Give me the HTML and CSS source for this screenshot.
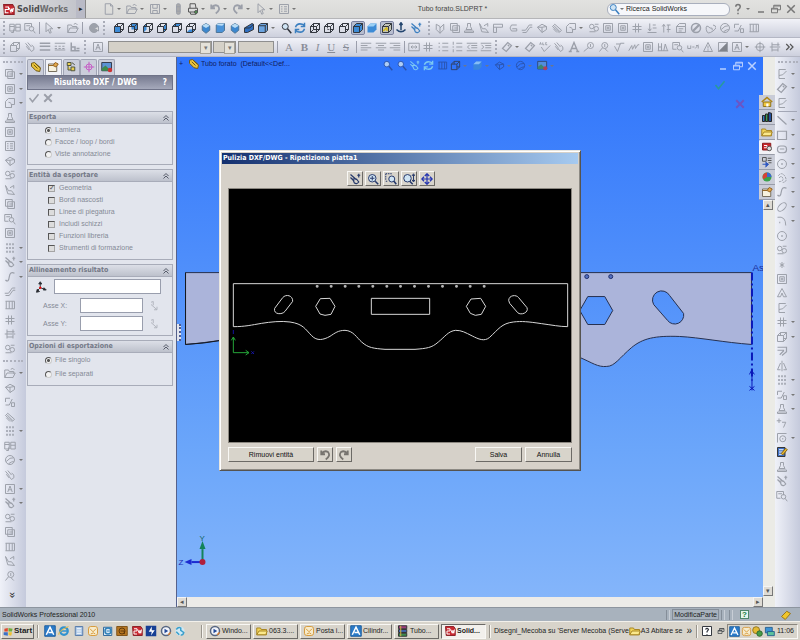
FILE: index.html
```html
<!DOCTYPE html>
<html lang="it">
<head>
    <meta charset="UTF-8">
    <title>SolidWorks - Tubo forato.SLDPRT</title>
    <link rel="stylesheet" href="styles.css">
</head>
<body>
    <header class="titlebar">
        <div class="brand"><span data-icon="sw"></span><b>Solid</b>Works</div>
        <button class="brand-arrow" aria-label="Menu">▸</button>
        <div class="icons file-tools" data-icons="page* open* save* lamp print:dark* undo* redo* cursor* list*"></div>
        <h1>Tubo forato.SLDPRT *</h1>
        <label class="search"><span data-icon="lens:blue"></span><span class="caret"></span>
            <input type="text" value="Ricerca SolidWorks" aria-label="Ricerca"></label>
        <div class="icons window-tools" data-icons="help* minimize restore close"></div>
    </header>

    <div class="toolbar">
        <i class="grip"></i>
        <div class="icons g-two" data-icons="frame search2"></div>
        <i class="sep"></i>
        <div class="icons g-select" data-icons="cursor* open"></div>
        <i class="sep"></i>
        <div class="icons g-one" data-icons="ball"></div>
        <i class="grip"></i>
        <div class="icons g-views" data-icons="front:ink back:ink left:ink right:ink top:ink bottom:ink iso:ink dim:ink iso:ink normal:ink view:ink* lens:ink rotate:blue wire:ink hidden:ink cube:ink shaded:ink! solid:blue section:ink! axis:blue spray:blue"></div>
        <i class="grip"></i>
        <div class="icons g-features" data-icons="blade stack stamp fold flange hem jog vent lofted corner* gear frame2 frame2 grid2 down up cards nosign ripple ball2 angle bars"></div>
    </div>

    <div class="toolbar">
        <i class="grip"></i>
        <div class="icons g-format" data-icons="cube brush lines hatch layer"></div>
        <i class="grip"></i>
        <div class="icons g-one" data-icons="style"></div>
        <span class="combo font-name"><select aria-label="Carattere"><option></option></select></span>
        <span class="combo font-size"><select aria-label="Dimensione"><option></option></select></span>
        <input class="height" type="text" aria-label="Altezza">
        <i class="sep"></i>
        <div class="letters">
            <button>A</button><button><b>B</b></button><button><i>I</i></button><button><u>U</u></button><button><s>S</s></button>
        </div>
        <i class="sep"></i>
        <div class="icons g-three" data-icons="alignl alignc alignr"></div>
        <i class="sep"></i>
        <div class="icons g-lists" data-icons="width grid2 bullets numbers outdent indent"></div>
        <i class="grip"></i>
        <div class="icons g-notes" data-icons="tag* tag spell brush textA balloon balloon2 rough weld frame2 dimA search2 bracket warn checker style* target cut more:dark"></div>
    </div>

    <main>
        <nav class="sidebar">
            <i class="grip"></i>
            <div class="icons s-first" data-icons="stack* frame2* corner* stamp frame2 list vent gear fold stack search2 frame2 grid* spray* spline* jog bars grid2 cut gear"></div>
            <i class="grip"></i>
            <div class="icons s-second" data-icons="open* vent angle lofted grid* frame ball2* brush style* spray* gear stack bars fold balloon2"></div>
            <button class="expand">»</button>
        </nav>

        <section class="manager">
            <div class="tabs icons" data-icons="part page2! config cross render"></div>
            <h2>Risultato DXF / DWG <span>?</span></h2>
            <div class="confirm icons" data-icons="check x"></div>

            <fieldset>
                <legend>Esporta <span data-icon="fold2"></span></legend>
                <label><input type="radio" name="source" checked>Lamiera</label>
                <label><input type="radio" name="source">Facce / loop / bordi</label>
                <label><input type="radio" name="source">Viste annotazione</label>
            </fieldset>
            <fieldset class="checks">
                <legend>Entità da esportare <span data-icon="fold2"></span></legend>
                <label><input type="checkbox" checked>Geometria</label>
                <label><input type="checkbox">Bordi nascosti</label>
                <label><input type="checkbox">Linee di piegatura</label>
                <label><input type="checkbox">Includi schizzi</label>
                <label><input type="checkbox">Funzioni libreria</label>
                <label><input type="checkbox">Strumenti di formazione</label>
            </fieldset>
            <fieldset class="align">
                <legend>Allineamento risultato <span data-icon="fold2"></span></legend>
                <div class="origin"><span data-icon="triad:ink"></span><input type="text" aria-label="Origine"></div>
                <div class="axis"><label for="axisX">Asse X:</label><input type="text" id="axisX"><span data-icon="flip"></span></div>
                <div class="axis"><label for="axisY">Asse Y:</label><input type="text" id="axisY"><span data-icon="flip"></span></div>
            </fieldset>
            <fieldset class="options">
                <legend>Opzioni di esportazione <span data-icon="fold2"></span></legend>
                <label><input type="radio" name="files" checked>File singolo</label>
                <label><input type="radio" name="files">File separati</label>
            </fieldset>
        </section>

        <section class="view">
            <div class="scene">
                <svg class="model" viewBox="177 56 586 541">
                    <path class="face" fill-rule="evenodd" d="M185 272H752V344C725 342 700 337 680 336C655 335 643 338 632 347C620 357 615 366 607 366C598 367 592 362 580 357C560 349 550 357 535 370C515 388 420 388 400 370C385 357 375 349 355 357C342 362 337 367 328 366C318 365 315 357 303 347C292 338 280 335 255 336C235 337 210 342 185 344ZM580 310L588 296H605L613 310L605 324H588ZM654 304A9 9 0 0 1 670 295L684 313A9 9 0 0 1 668 320Z"/>
                    <path class="edge" d="M185 272V344M185 344Q204 343 220 340"/>
                    <circle class="hole" cx="587" cy="276" r="2"/>
                    <circle class="hole" cx="611" cy="276" r="2"/>
                    <path class="axis-line" d="M752.500 272V380"/>
                    <path class="axis-end" d="M752.500 372V390M750 374l2-4 3 4M750 386l5 4M755 386l-5 4"/>
                    <text class="axis-name" x="753" y="270">As</text>
                    <path d="M202 561V549" stroke="#14835a" stroke-width="2"/>
                    <path d="M202 541l3 8h-6z" fill="#14835a"/>
                    <path d="M202 562H191" stroke="#1c2bd0" stroke-width="2"/>
                    <path d="M184 562l7-3v6z" fill="#1c2bd0"/>
                    <circle cx="202" cy="562" r="3" fill="#b01f3c"/>
                    <text class="triad-y" x="199" y="541">Y</text>
                    <text class="triad-z" x="178" y="565">Z</text>
                </svg>
                <div class="tree"><span class="plus">+</span><span data-icon="part"></span>Tubo forato&nbsp; (Default&lt;&lt;Def...</div>
                <div class="icons headsup" data-icons="lens lens spray:cyan rotate:cyan bars cube:ink* solid* vent* ball2* render*"></div>
                <div class="icons doc-window" data-icons="minimize restore close"></div>
                <div class="icons corner-ok" data-icons="check"></div>
                <div class="icons corner-no" data-icons="x"></div>
                <i class="splitter"></i>
            </div>
            <div class="hscroll"><button>◂</button><button>▸</button></div>
        </section>

        <aside class="vscroll">
            <div class="icons task-tabs" data-icons="home library folder resource! palette sphere page2"></div>
            <button class="up">▴</button>
            <button class="down">▾</button>
        </aside>

        <nav class="sidebar sketch">
            <i class="grip"></i>
            <div class="icons k-first" data-icons="sketch* tag* sketch"></div>
            <i class="line"></i>
            <div class="icons k-second" data-icons="slash* rect* slot* circle* spiral* spline* ellipse* arc* circle gear star frame2 textA2 sketch grid2* cube* offset mirror grid* angle* stamp* plus2 target2* color stamp spray search2"></div>
        </nav>
    </main>

    <footer class="status">
        <span>SolidWorks Professional 2010</span>
        <i></i><b>ModificaParte</b><i></i><i></i>
        <em>?</em>
        <span class="tag-icon" data-icon="goldtag"></span>
    </footer>

    <footer class="taskbar">
        <button class="start"><span data-icon="windows"></span>Start</button>
        <i class="div"></i>
        <div class="icons quick" data-icons="appA ie note mail outlook fox sw bird player globe"></div>
        <i class="div"></i>
        <div class="tasks">
            <button><span data-icon="player"></span>Windo...</button>
            <button><span data-icon="folder"></span>063.3....</button>
            <button><span data-icon="mail"></span>Posta i...</button>
            <button><span data-icon="appA"></span>Cilindr...</button>
            <button><span data-icon="rar"></span>Tubo...</button>
            <button class="current"><span data-icon="sw"></span>Solid...</button>
        </div>
        <i class="div"></i>
        <span class="links">Disegni_Mecoba su 'Server Mecoba (Serve</span>
        <span data-icon="folder"></span>
        <span class="links folder-link">A3 Abitare se</span>
        <span class="chevron">»</span>
        <i class="div"></i>
        <div class="icons lang" data-icons="helpbox:ink restore:ink"></div>
        <div class="tray"><div class="icons" data-icons="appA mail shield screen"></div><time>11:06</time></div>
    </footer>

    <section class="dialog" role="dialog" aria-labelledby="dialogTitle">
        <h3 id="dialogTitle">Pulizia DXF/DWG - Ripetizione piatta1</h3>
        <div class="icons dialog-tools" data-icons="spray:navy lensplus:navy lensbox:navy lensarrow:navy move:navy"></div>
        <svg class="preview" viewBox="42 -213 1026 759">
            <path d="M55 200V71H1058V200C1035 200 1010 195 980 191C940 185 920 183 895 186C860 190 850 208 824 232C808 246 790 237 772 228C750 217 740 211 722 211C700 213 690 230 670 246C650 264 635 265 600 268H510C475 265 460 264 440 246C425 233 415 212 390 211C370 211 360 219 345 229C325 240 306 244 290 227C270 207 265 192 225 186C200 182 165 186 140 190C110 195 90 200 55 200Z"/>
            <path d="M469 115H644V163H469ZM302 139L316 116L345 115L360 139L348 163L330 166L315 162ZM754 139L768 117L797 115L812 139L799 163L781 166L766 160Z"/>
            <path d="M179 145L203 113C213 101 234 106 233 124L210 154C202 165 174 164 179 145ZM881 121C882 105 904 103 911 113L936 143C942 158 918 167 908 158L884 130Z"/>
            <path class="dots" d="M306 79h1M348 79h1M390 79h1M431 79h1M473 79h1M515 79h1M556 79h1M598 79h1M640 79h1M682 79h1M724 79h1M765 79h1M807 79h1"/>
            <path class="green" d="M55 278V232M49 241L55 231L61 241M55 278H102M92 271L102 278L92 285"/>
            <path class="blue" d="M109 274l8 8M117 274l-8 8M55 210v12"/>
        </svg>
        <div class="dialog-actions">
            <button class="remove">Rimuovi entità</button>
            <button class="square" aria-label="Annulla azione"><span data-icon="undo"></span></button>
            <button class="square" aria-label="Ripeti"><span data-icon="redo"></span></button>
            <span class="space"></span>
            <button>Salva</button>
            <button>Annulla</button>
        </div>
    </section>

    <script src="icons.js"></script>
</body>
</html>
```
FILE: styles.css
```css
* {
    box-sizing: border-box;
}

body {
    margin: 0;
    height: 100vh;
    display: flex;
    flex-direction: column;
    overflow: hidden;
    background: #e2e5ed;
    color: #222;
    font-family: "Liberation Sans", Arial, sans-serif;
    font-size: 7px;
    line-height: 12px;
}

h1, h2, h3, fieldset, legend {
    margin: 0;
    padding: 0;
    font-size: inherit;
}

button, input, select {
    margin: 0;
    padding: 0;
    border: 0;
    background: none;
    color: inherit;
    font: inherit;
}

[data-icon], .icons, .icons button, .letters {
    display: flex;
    align-items: center;
}

svg {
    display: block;
}

.icon {
    width: 12px;
    height: 12px;
    fill: none;
    stroke: currentColor;
    stroke-width: 1.3;
    flex: none;
}

.icons {
    justify-content: space-between;
    color: #9b9fa9;
}

.icons button {
    position: relative;
    flex: none;
}

.icons .drop {
    padding-right: 8px;
}

.icons .drop::after, .caret {
    content: "";
    border: 2px solid transparent;
    border-top-color: #777;
    border-bottom: 0;
}

.icons .drop::after {
    position: absolute;
    right: 2px;
    top: 5px;
}

.icons .ink, .ink { color: #30343c; }
.icons .dark { color: #555; }
.icons .blue, .blue { color: #3b7fc0; }
.icons .navy { color: #25386a; }
.icons .cyan { color: #8edcf0; }

/* title bar */
.titlebar {
    flex: none;
    height: 19px;
    display: flex;
    align-items: center;
    background: linear-gradient(#e2e2e0, #d9d9d7);
    border-bottom: 1px solid #b5b5b8;
}

.brand {
    width: 76px;
    height: 18px;
    display: flex;
    align-items: center;
    padding-left: 2px;
    background: linear-gradient(90deg, #e0e0e0, #c4c5cc);
    color: #6e6e70;
    font: bold 9px/12px "DejaVu Sans Condensed", sans-serif;
}

.brand .icon {
    width: 13px;
    height: 13px;
    margin-right: 2px;
}

.brand b {
    color: #4c4c4e;
}

.brand-arrow {
    width: 10px;
    height: 18px;
    background: #b9bac6;
    border-right: 1px solid #888;
}

.file-tools {
    width: 195px;
    margin-left: 17px;
}

.titlebar h1 {
    flex: 1;
    text-align: center;
    font-weight: normal;
    color: #444;
}

.search {
    width: 123px;
    height: 13px;
    display: flex;
    align-items: center;
    background: #f6f7fa;
    border: 1px solid #a9afbd;
    border-radius: 6px;
}

.search .caret {
    margin: 0 2px 0 0;
}

.search input {
    min-width: 0;
    flex: 1;
}

.window-tools {
    width: 65px;
    margin: 0 3px 0 2px;
    color: #777;
}

/* toolbars */
.toolbar {
    flex: none;
    height: 19px;
    display: flex;
    align-items: center;
    background: linear-gradient(#f1f2f8, #cdd0dd);
    border-bottom: 1px solid #b4b7c4;
}

.grip {
    flex: none;
    width: 2px;
    height: 14px;
    margin: 0 4px 0 3px;
    border-left: 2px dotted #a9acb8;
}

.sep {
    flex: none;
    width: 1px;
    height: 12px;
    margin: 0 3px;
    background: #9b9eab;
}

.g-two { width: 27px; }
.g-select { width: 36px; }
.g-one { width: 14px; }
.g-three { width: 41px; }
.g-lists { width: 84px; }
.g-format { width: 72px; }

.g-one {
    padding-left: 2px;
}

.g-views {
    width: 316px;
    padding: 0 3px 0 4px;
}

.g-features {
    flex: 1;
    margin-right: 40px;
}

.g-notes {
    flex: 1;
    margin-right: 4px;
}

.icons .active {
    background: #b7bdcf;
    outline: 1px solid #7b82a0;
    border-radius: 1px;
}

.combo {
    position: relative;
    height: 12px;
    margin-left: 1px;
    background: #d5d1c8;
    border: 1px solid #8f8f8f;
}

.combo select {
    width: 100%;
    height: 10px;
    display: block;
    appearance: none;
}

.combo::after {
    content: "▾";
    position: absolute;
    right: 0;
    top: 0;
    width: 9px;
    height: 10px;
    line-height: 9px;
    text-align: center;
    color: #777;
    background: #e4e1d9;
    border: 1px solid #a5a29a;
}

.font-name {
    width: 104px;
    margin-left: 4px;
}

.font-size { width: 23px; }

.height {
    width: 36px;
    height: 12px;
    margin-left: 2px;
    background: #d5d1c8;
    border: 1px solid #8f8f8f;
}

.letters {
    width: 72px;
    justify-content: space-around;
    color: #898d98;
    font-family: "Liberation Serif", serif;
    font-size: 11px;
}

/* work area */
main {
    flex: 1;
    min-height: 0;
    display: flex;
}

.sidebar {
    flex: none;
    width: 26px;
    display: flex;
    flex-direction: column;
    background: linear-gradient(90deg, #eff1f8, #c5cadc);
}

.sidebar .grip {
    width: 20px;
    height: 2px;
    margin: 4px 3px;
    border-left: 0;
    border-top: 2px dotted #aeb1bd;
}

.sidebar .icons {
    flex-direction: column;
    align-items: flex-start;
    justify-content: space-around;
    padding-left: 4px;
}

.sidebar .icons .drop {
    padding-right: 9px;
}

.s-first { flex: 20; }
.s-second { flex: 15; }

.sidebar .expand {
    height: 24px;
    padding-left: 0;
    font-size: 11px;
    transform: rotate(90deg);
}

.sketch {
    width: 25px;
}

.sketch .k-first {
    height: 43px;
    padding-left: 1px;
}

.sketch .k-second {
    height: 390px;
    padding-left: 1px;
}

.line {
    height: 1px;
    margin: 1px 3px;
    background: #a3a7b6;
}

.manager {
    flex: none;
    width: 151px;
    padding: 1px 3px 0 1px;
    background: #e2e5ed;
    border-right: 1px solid #56628c;
}

.tabs {
    width: 88px;
    height: 17px;
}

.tabs button {
    width: 17px;
    height: 16px;
    justify-content: center;
    background: #cbcedb;
    border: 1px solid #a0a4b4;
    border-bottom: 0;
    border-radius: 2px 2px 0 0;
}

.tabs .active {
    background: #f1f2f7;
    outline: 0;
}

.manager h2 {
    height: 15px;
    padding: 0 5px 0 26px;
    display: flex;
    justify-content: space-between;
    background: linear-gradient(#777b90, #a5a9bb);
    border: 1px solid #6f7388;
    color: #fff;
    font: bold 8px/13px "DejaVu Sans Condensed", sans-serif;
}

.confirm {
    width: 28px;
    height: 16px;
    margin-bottom: 5px;
    justify-content: space-around;
}

fieldset {
    min-width: 0;
    margin-bottom: 4px;
    padding-bottom: 4px;
    border: 1px solid #a8acb9;
    color: #858a96;
}

legend {
    float: left;
    width: 100%;
    height: 12px;
    padding: 0 1px;
    display: flex;
    justify-content: space-between;
    background: linear-gradient(#dcdfe7, #bdc1cc);
    border-bottom: 1px solid #a8acb9;
    color: #747987;
    font: bold 7px/11px "DejaVu Sans Condensed", sans-serif;
}

legend .icon {
    width: 10px;
    height: 10px;
}

fieldset > label, .origin {
    clear: both;
    display: flex;
    align-items: center;
    height: 12px;
    padding-left: 17px;
}

fieldset input[type="radio"], fieldset input[type="checkbox"] {
    appearance: none;
    width: 7px;
    height: 7px;
    margin-right: 3px;
    border: 1px solid #a5a5a5;
    border-top-color: #555;
    border-left-color: #555;
    background: #dcdcdc;
}

fieldset input[type="radio"] {
    border-radius: 50%;
    border-right-color: #ccc;
    border-bottom-color: #ccc;
    background: #f2f2f2;
}

fieldset input[type="radio"]:checked {
    background: radial-gradient(#555 1px, #f2f2f2 2px);
}

.checks > label {
    padding-left: 20px;
}

.checks input[type="checkbox"] {
    margin-right: 4px;
}

.checks input[type="checkbox"]:checked::after {
    content: "✓";
    display: block;
    color: #555;
    font: bold 7px/5px "DejaVu Sans", sans-serif;
}

.checks {
    padding-bottom: 5px;
}

.align {
    padding-bottom: 3px;
}

.origin {
    height: 19px;
    padding-left: 7px;
}

.align input {
    height: 15px;
    background: #fff;
    border: 1px solid #999ead;
}

.origin input {
    width: 107px;
    margin-left: 7px;
}

.axis {
    display: flex;
    align-items: center;
    height: 17px;
    padding-left: 15px;
    margin-top: 1px;
}

.axis label {
    width: 37px;
}

.axis input {
    width: 63px;
    margin-right: 5px;
}

.options > label {
    height: 14px;
}

/* graphics area */
.view {
    flex: 1;
    min-width: 0;
    display: flex;
    flex-direction: column;
}

.scene {
    position: relative;
    flex: 1;
    min-height: 0;
    background: linear-gradient(#2f74fc, #6ba6fa 73%, #84b5fa);
}

.model {
    position: absolute;
    width: 100%;
    height: 100%;
}

.face {
    fill: #abb4da;
    stroke: #26304f;
}

.edge {
    fill: none;
    stroke: #15181f;
}

.hole {
    fill: #5570c0;
    stroke: #20306c;
}

.axis-line, .axis-end {
    fill: none;
    stroke: #0a18b8;
}

.axis-line {
    stroke-width: 2;
    stroke-dasharray: 8 3 2 3;
}

.axis-name {
    fill: #1b2f9c;
    font-size: 10px;
}

.triad-y { fill: #15655e; font-size: 8px; }
.triad-z { fill: #1c2bb0; font-size: 8px; }

.tree {
    position: absolute;
    left: 2px;
    top: 1px;
    display: flex;
    align-items: center;
    color: #101c5c;
}

.tree .plus {
    width: 9px;
}

.tree [data-icon] {
    margin-right: 1px;
}

.headsup {
    position: absolute;
    left: 205px;
    top: 3px;
    width: 174px;
    color: #294a98;
    opacity: 0.8;
}

.headsup .icon {
    width: 11px;
    height: 11px;
}

.doc-window {
    position: absolute;
    right: 5px;
    top: 3px;
    width: 41px;
    color: #b9d0ff;
}

.corner-ok {
    position: absolute;
    right: 37px;
    top: 22px;
    color: #289a9c;
}

.corner-no {
    position: absolute;
    right: 17px;
    top: 41px;
    color: #6b55c4;
}

.splitter {
    position: absolute;
    left: 0;
    top: 267px;
    width: 4px;
    height: 17px;
    background: #e2e5ed;
    border-right: 2px dotted #4c5c94;
}

.hscroll {
    flex: none;
    height: 10px;
    display: flex;
    justify-content: space-between;
    background: #ecebe8;
}

.hscroll button, .vscroll > button {
    width: 10px;
    height: 10px;
    line-height: 8px;
    background: #dedbd4;
    border: 1px solid;
    border-color: #f4f4f4 #777 #777 #f4f4f4;
    color: #555;
}

.vscroll {
    flex: none;
    width: 12px;
    padding: 38px 1px 11px 0;
    display: flex;
    flex-direction: column;
    background: #ebebe6;
}

.task-tabs {
    position: relative;
    flex-direction: column;
    width: 17px;
    margin-left: -5px;
}

.task-tabs button {
    width: 16px;
    height: 15px;
    justify-content: center;
    background: #c9ccd7;
    border-bottom: 1px solid #989ca9;
}

.task-tabs .active {
    background: #f2f2f6;
    outline: 0;
}

.vscroll .down {
    margin-top: auto;
}

/* bottom bars */
.status {
    flex: none;
    height: 14px;
    display: flex;
    align-items: center;
    padding: 0 8px 0 2px;
    background: #a8b2bd;
    border-top: 1px solid #8d959f;
}

.status span:first-child {
    flex: 1;
}

.status i {
    width: 4px;
    height: 10px;
    margin: 0 2px;
    border-left: 1px solid #858e99;
    border-right: 1px solid #c8ced6;
}

.status b {
    padding: 0 1px;
    border: 1px solid #858e99;
    line-height: 9px;
    font-weight: normal;
}

.status em {
    width: 9px;
    height: 9px;
    margin: 0 31px 0 5px;
    background: #e5f5ec;
    border: 1px solid #50876b;
    color: #137b3a;
    font: bold 8px/8px "Liberation Sans", sans-serif;
    text-align: center;
}

.taskbar {
    flex: none;
    height: 19px;
    display: flex;
    align-items: center;
    padding: 0 2px 0 1px;
    background: #d8d4cb;
    border-top: 1px solid #f2f0eb;
}

.start, .tasks button, .dialog button {
    display: flex;
    align-items: center;
    justify-content: center;
    background: #d8d4cb;
    border: 1px solid;
    border-color: #f8f7f4 #6c6a66 #6c6a66 #f8f7f4;
}

.start {
    width: 33px;
    height: 15px;
    font-size: 8px;
    font-weight: bold;
}

.start .icon {
    width: 11px;
    height: 11px;
}

.div {
    flex: none;
    width: 2px;
    height: 13px;
    margin: 0 3px;
    border-left: 1px solid #99958d;
    border-right: 1px solid #f7f5f0;
}

.quick {
    width: 142px;
    margin: 0 12px 0 2px;
}

.tasks {
    display: flex;
    gap: 2px;
}

.tasks button {
    width: 45px;
    height: 15px;
    justify-content: flex-start;
    padding-left: 2px;
    gap: 1px;
}

.tasks .current {
    background: #f2f0ec;
    border-color: #6c6a66 #f8f7f4 #f8f7f4 #6c6a66;
    font-weight: bold;
}

.links {
    white-space: nowrap;
}

.folder-link {
    flex: 1;
}

.chevron {
    margin: 0 1px;
    font-size: 10px;
}

.lang {
    width: 24px;
}

.lang button:last-child .icon {
    width: 8px;
    height: 8px;
}

.tray {
    width: 71px;
    height: 15px;
    margin-left: 2px;
    padding: 0 3px 0 1px;
    display: flex;
    align-items: center;
    justify-content: space-between;
    border: 1px solid;
    border-color: #8a867e #f8f7f4 #f8f7f4 #8a867e;
}

.tray .icons {
    width: 46px;
}

.tray .icon {
    width: 11px;
    height: 11px;
}

/* dialog */
.dialog {
    position: absolute;
    left: calc(50% - 181px);
    top: 150px;
    width: 362px;
    padding: 2px;
    background: #d6d1c9;
    border: 1px solid;
    border-color: #e8e6e0 #55534f #55534f #e8e6e0;
    box-shadow: inset 1px 1px #fff, inset -1px -1px #8d8a84;
}

.dialog h3 {
    height: 11px;
    padding-left: 1px;
    background: linear-gradient(90deg, #14306f, #a6caf0);
    color: #fff;
    font: bold 7px/11px "DejaVu Sans Condensed", sans-serif;
}

.dialog-tools {
    width: 88px;
    margin: 7px auto 2px 125px;
}

.dialog-tools button, .dialog .square {
    width: 16px;
    height: 15px;
    justify-content: center;
}

.preview {
    display: block;
    width: 344px;
    margin: 0 auto;
    background: #000;
    border: 1px solid #8b8780;
    fill: none;
    stroke: #d6d6d6;
    stroke-width: 3;
}

.preview .dots {
    stroke-width: 8;
    stroke: #b5b5b5;
    stroke-linecap: round;
}

.preview .green { stroke: #25a539; }
.preview .blue { stroke: #1414a0; }

.dialog-actions {
    display: flex;
    gap: 3px;
    padding: 4px 6px 6px;
    color: #111;
}

.dialog-actions button {
    width: 47px;
    height: 15px;
}

.dialog-actions .remove {
    width: 86px;
}

.dialog-actions .square {
    color: #77746f;
}

.dialog-actions .square .icon {
    stroke-width: 2;
}

.dialog-actions .space {
    flex: 1;
}
```
FILE: icons.js
```js
// icon shapes on a 16x16 grid
const box = '<path d="M2 6h8v8H2zM6 2h8v8h-4M6 2v4M2 6l4-4M10 6l4-4M10 14l4-4"/>';
const face = d => `<path d="${d}" fill="#3d8bd6" stroke="none"/>` + box;

const shapes = {
    page: '<path d="M3 1h7l3 3v11H3zM10 1v3h3"/>',
    open: '<path d="M1 14V4h5l1 2h6v3M1 14l3-6h11l-3 6zM9 3q3-3 5 1"/>',
    save: '<path d="M2 2h12v12H2zM5 2v5h6V2M5 14v-4h6v4"/>',
    lamp: '<rect x="6" y="1" width="5" height="14" rx="2" fill="#aaa"/><path d="M6 5h5M6 11h5"/>',
    print: '<path d="M4 7V1h7l1 6M2 7h12v5H2zM4 12l1 3h7v-3" fill="#ddd"/><circle cx="12" cy="12" r="2" fill="#4e9b4e"/>',
    undo: '<path d="M3 2v5h5M3 7q4-6 9-3q4 5-3 10" stroke-width="2.4"/>',
    redo: '<path d="M13 2v5H8M13 7Q9 1 4 4q-4 5 3 10" stroke-width="2.4"/>',
    cursor: '<path d="M4 1v12l3-3 2 5 2-1-2-5h4z"/>',
    list: '<path d="M2 2h12v12H2zM4 5h2M8 5h4M4 8h2M8 8h4M4 11h2M8 11h4"/>',
    help: '<path d="M5 5q0-3 3-3t3 3q0 2-3 4v2M8 13v2" stroke-width="2"/>',
    minimize: '<path d="M4 12h8" stroke-width="2"/>',
    restore: '<path d="M2 7h8v6H2zM5 7V3h9v6h-4M2 8h8M5 4h9"/>',
    close: '<path d="M3 3l10 10M13 3L3 13" stroke-width="2"/>',
    frame: '<path d="M1 3h6v9H1zM9 3h6v9H9zM1 6h6M9 7h6M3 14h3v-4"/>',
    frame2: '<path d="M2 2h12v12H2zM5 5h6v6H5zM7 7h2v2H7z"/>',
    search2: '<path d="M1 2h9v5M1 2v9h5M3 5h5"/><circle cx="10" cy="9" r="3"/><path d="M12 11l3 4"/>',
    ball: '<circle cx="8" cy="8" r="6" fill="#9da1aa"/><path d="M8 8l6-2v6z" fill="#ddd"/>',
    ball2: '<circle cx="8" cy="8" r="6"/><path d="M3 10q5-6 10-5M6 13q4-3 7-3"/>',
    cube: box,
    wire: box + '<path d="M6 2v8h8M2 14l4-4"/>',
    hidden: box + '<path d="M6 7v3h5" stroke-dasharray="1 1"/>',
    front: face('M2 6h8v8H2z'),
    back: face('M6 2h8v8H6z'),
    left: face('M2 6l4-4v8l-4 4z'),
    right: face('M10 6l4-4v8l-4 4z'),
    top: face('M2 6l4-4h8l-4 4z'),
    bottom: face('M2 14l4-4h8l-4 4z'),
    iso: '<path d="M8 2l5 3v6l-5 4-5-4V5z" fill="#3c87cf" stroke="#4b7396"/><path d="M8 2l5 3-5 3-5-3z" fill="#b8dcf5" stroke="none"/>',
    dim: '<path d="M3 4l3-2h8v9l-3 3H3z" fill="#4a92d8" stroke="#4b7396"/><path d="M3 4l3-2h8l-3 3z" fill="#bfe0f8" stroke="none"/>',
    normal: '<path d="M2 8l10-6 2 1v7l-8 4H2z" fill="#2f6fc0"/><path d="M2 8h7l5-5"/>',
    view: '<path d="M2 5l3-3h9v9l-3 3H2z" fill="#6ba4e0"/><path d="M2 5h9v9M11 5l3-3"/>',
    shaded: '<path d="M2 6l4-4h8v8l-4 4H2z" fill="#3d8bd6"/><path d="M2 6h8v8M10 6l4-4"/>',
    solid: '<path d="M2 6l4-4h8v8l-4 4H2z" fill="#3d8bd6" stroke="none"/><path d="M2 6l4-4h8l-4 4z" fill="#9bd0f5" stroke="none"/>',
    section: '<path d="M2 6l4-4h8v8l-4 4H2z" fill="#c3c4b8"/><path d="M2 6h8v8M10 6l4-4"/><path d="M3 12l5-5M5 9h3v3" stroke="#d5b91e" stroke-width="2"/>',
    lens: '<circle cx="7" cy="6" r="4" fill="#cfe4f4"/><path d="M10 9l5 6" stroke-width="2"/>',
    lensplus: '<circle cx="7" cy="7" r="5" fill="#cfe4f4"/><path d="M11 11l4 4" stroke-width="2"/><path d="M4 7h6M7 4v6"/>',
    lensbox: '<path d="M1 1h8M1 1v8M1 11h3" stroke-dasharray="2 1"/><circle cx="9" cy="8" r="4" fill="#cfe4f4"/><path d="M12 11l3 4" stroke-width="2"/>',
    lensarrow: '<circle cx="6" cy="7" r="5" fill="#cfe4f4"/><path d="M9 11l4 4" stroke-width="2"/><path d="M14 2v9M12 4l2-3 2 3M12 9l2 3 2-3"/>',
    move: '<path d="M8 1v14M1 8h14M5 4l3-3 3 3M5 12l3 3 3-3M4 5L1 8l3 3M12 5l3 3-3 3" stroke="#2434b0" stroke-width="1.6"/>',
    rotate: '<path d="M2 7q2-6 9-4l3 2M14 1v5H9M14 9q-2 6-9 4l-3-2M2 15v-5h5" stroke-width="2"/>',
    axis: '<path d="M8 2v9M6 4l2-3 2 3M2 10q6 6 12 0" stroke="#23456f" stroke-width="2"/>',
    spray: '<path d="M2 2l8 7M2 6l5 5M11 3h4M13 1v5M10 8l3 4q-3 4-6 1L5 8z" stroke-width="1.6"/>',
    blade: '<path d="M3 3l5 3v9L3 10zM8 8l5-5v7l-5 5"/>',
    stack: '<path d="M2 2h9v9H2zM5 5h9v9H5zM7 8h5M7 11h5"/>',
    stamp: '<path d="M6 2h4v4l2 4H4l2-4zM2 12h12v2H2z"/>',
    fold: '<path d="M2 2l3 11 9 1-4-5H6zM8 5l5-3v4"/>',
    fold2: '<path d="M4 8l4-4 4 4M4 12l4-4 4 4" stroke="#555a68" stroke-width="1.6"/>',
    flange: '<path d="M2 14V3h12v4H6v7zM2 7h4"/>',
    hem: '<path d="M13 4H6q-4 4 0 8h7V9H7"/>',
    jog: '<path d="M1 11h5l5-7h4M2 14h5l5-7h3"/>',
    vent: '<path d="M2 7l6-4 6 3v4l-6 4zM8 7v7M8 7l6-1M2 7l6 0"/>',
    lofted: '<path d="M2 6l3-3 9 8-3 3zM4 5l8 8M3 9l5 5"/>',
    corner: '<path d="M2 14V6l4-4h8v8h-4v4zM6 7q5 0 4 7"/>',
    gear: '<circle cx="5" cy="6" r="3"/><circle cx="11" cy="9" r="3"/><path d="M2 13h8M9 3h5"/>',
    grid: '<path d="M3 3h2M7 3h2M11 3h2M3 8h2M7 8h2M11 8h2M3 13h2M7 13h2M11 13h2" stroke-width="2.6"/>',
    grid2: '<path d="M6 2v12M10 2v12M2 6h12M2 10h12"/>',
    down: '<path d="M5 2v9M3 9l2 3 2-3M9 4h4M9 8h5M2 14h12"/>',
    up: '<path d="M5 14V4M3 6l2-3 2 3M9 4h5M11 4v10M9 10h5"/>',
    cards: '<path d="M2 6h12v8H2zM2 6l4-4h8v4M5 9h6M5 12h4"/>',
    nosign: '<circle cx="8" cy="8" r="6" stroke-width="2"/><path d="M4 12l8-8" stroke-width="3"/>',
    ripple: '<path d="M8 8q-6-6-5 2t9 2 0-8M8 8q4-1 3 3"/>',
    angle: '<path d="M2 3h6M2 3v5M2 12h5l4-8M10 9h4v5h-4z"/>',
    bars: '<path d="M3 3v10M7 3v10M11 3v10M14 3v10M2 3h12M2 13h12"/>',
    brush: '<path d="M2 3l5 6M5 2l5 6M6 9l4 5q5-2 3-6l-3-3M3 7l4 5"/>',
    lines: '<path d="M1 3h14M1 7h14M1 12h14" stroke-width="2"/>',
    hatch: '<path d="M1 3h14M1 12h14"/><path d="M1 7h14M1 10h14" stroke-dasharray="3 2"/>',
    layer: '<path d="M3 2v11h11M3 8h5v5M10 10h4" stroke-width="2"/>',
    style: '<path d="M2 2h12v12H2zM5 12l3-8 3 8M6 9h4"/>',
    alignl: '<path d="M1 3h14M1 6h9M1 9h14M1 12h9"/>',
    alignc: '<path d="M1 3h14M4 6h8M1 9h14M4 12h8"/>',
    alignr: '<path d="M1 3h14M6 6h9M1 9h14M6 12h9"/>',
    width: '<path d="M1 3h14v10H1zM4 8h8M6 6L4 8l2 2M10 6l2 2-2 2"/>',
    bullets: '<path d="M2 3h2M2 8h2M2 13h2M7 3h8M7 8h8M7 13h8"/>',
    numbers: '<path d="M3 1v4M2 8h2M3 11v4M7 3h8M7 8h8M7 13h8"/>',
    outdent: '<path d="M1 3h14M7 6h8M7 9h8M1 13h14M5 5L2 8l3 3"/>',
    indent: '<path d="M1 3h14M7 6h8M7 9h8M1 13h14M2 5l3 3-3 3"/>',
    tag: '<path d="M2 10l7-8 5 4-7 8zM9 5l2 2" stroke-width="1.6"/>',
    spell: '<path d="M1 5l1-3 1 3M5 2v3h2M10 2H9v3h2M3 8l4 6 8-8"/>',
    textA: '<path d="M3 14L8 2l5 12M5 10h6M1 14h4M11 14h4" stroke-width="1.8"/>',
    textA2: '<path d="M2 13L8 2l6 11h-4l-2-5-2 5z"/>',
    balloon: '<circle cx="10" cy="6" r="4"/><path d="M7 9l-6 5M10 4v4"/>',
    balloon2: '<circle cx="9" cy="6" r="4"/><path d="M6 9l-4 5M9 10l4 4M9 4v4"/>',
    rough: '<path d="M2 7l4 7 4-11h5M4 4h6"/>',
    weld: '<path d="M1 13l4-7 1 5 3-6 1 5 3-5h2"/>',
    dimA: '<path d="M2 3v10M6 3v10M2 8h4M9 13l2-9 3 9M1 13h14"/>',
    bracket: '<path d="M1 6v4h4V6M7 8h3M11 10l4-5M12 6h3v4"/>',
    warn: '<path d="M8 2l6 12H2zM8 6v4M8 11v2"/>',
    checker: '<path d="M2 2h12v12H2z"/><path d="M2 14L14 2v12z" fill="#80838b"/>',
    target: '<circle cx="8" cy="8" r="5"/><path d="M8 1v14M1 8h14"/>',
    target2: '<path d="M2 14V2h12"/><circle cx="9" cy="9" r="4"/><path d="M9 8v2"/>',
    cut: '<path d="M4 2v12M12 2v5M4 5h10M1 8h14M12 9v5M4 12h8"/>',
    more: '<path d="M3 4l4 4-4 4M8 4l4 4-4 4" stroke-width="1.6"/>',
    spline: '<path d="M2 12q4 4 5-4t7-5" stroke-width="1.6"/>',
    sketch: '<path d="M13 2H4v12h8M4 10l5-1 5-5"/>',
    slash: '<path d="M2 3l12 11" stroke-width="1.6"/>',
    rect: '<path d="M2 3h12v11H2z" stroke-width="1.6"/>',
    slot: '<rect x="2" y="4" width="12" height="9" rx="4" stroke-width="1.6"/><path d="M5 8h6"/>',
    circle: '<circle cx="8" cy="8" r="6"/><path d="M8 7v2M7 8h2"/>',
    spiral: '<path d="M3 5q5-6 9 1t-3 8M4 8q3-4 5 0t-5 5" stroke-dasharray="3 1"/>',
    ellipse: '<ellipse cx="8" cy="8" rx="7" ry="4" transform="rotate(-45 8 8)"/>',
    arc: '<path d="M2 3q11-2 11 11M5 9v2"/>',
    star: '<path d="M8 4v8M5 6l6 4M11 6l-6 4"/>',
    offset: '<path d="M2 3h12v6l-6 5M2 7h8v1l-5 5" stroke-width="1.6"/>',
    mirror: '<path d="M8 1v14M6 4L2 13h4M10 4l4 9h-4"/>',
    plus2: '<path d="M4 2v6M1 5h6M8 7h5l-3 7"/>',
    flip: '<path d="M4 3l3-1v5M4 6l8 7M8 13h4V9" stroke="#b2b5be"/>',
    check: '<path d="M2 8l4 5 8-10" stroke-width="2"/>',
    x: '<path d="M3 3l10 10M13 3L3 13" stroke-width="2.6"/>',
    triad: '<path d="M7 9V3M7 9l6 2M7 9l-4 4"/><circle cx="7" cy="9" r="1" fill="red" stroke="red"/><path d="M5 4l2-3 2 3zM12 9l3 3h-4zM3 11l-1 4 4-1z" fill="#222"/>',
    // coloured ones
    sw: '<path d="M2 2h11l2 3v9H3z" fill="#c92a31" stroke="#8d2228"/><path d="M4 5h4v3H4v4h4M9 6l2 5 1-4 1 4 1-5" stroke="#fff"/>',
    part: '<path d="M2 3l4-1 8 7-1 5-5-1-6-6z" fill="#e9c33c" stroke="#6f5714"/><path d="M5 5l5 5M7 3l6 6" stroke="#6f5714"/>',
    page2: '<path d="M2 4h11v10H2z" fill="#f7f2df" stroke="#756d5b"/><path d="M2 6h6M8 6l3-4 4 2-3 4z" fill="#e4a94c" stroke="#946422"/>',
    config: '<path d="M3 2h5v4H3zM8 8h5v5H8zM4 6v6h4" fill="#e9cf51" stroke="#4d5240"/><path d="M9 2l4 3" stroke="#4d5240"/>',
    cross: '<circle cx="8" cy="8" r="4" stroke="#c45bc4"/><path d="M8 1v14M1 8h14" stroke="#c45bc4"/>',
    render: '<path d="M1 2h13v11H1z" fill="#5b93d4" stroke="#333b4c"/><path d="M1 10l5-4 7 7H1z" fill="#3e8b4d" stroke="none"/><circle cx="12" cy="12" r="3" fill="#c33" stroke="none"/>',
    home: '<path d="M1 8l7-6 7 6" stroke="#af8614" stroke-width="2"/><path d="M3 8h10v6H3z" fill="#f0c63c" stroke="#8e721e"/><path d="M7 10h3v4H7z" fill="#fff" stroke="none"/>',
    library: '<path d="M2 6h3v8H2z" fill="#3677c4" stroke="#222"/><path d="M6 4h3v10H6z" fill="#3ea14f" stroke="#222"/><path d="M10 2l4 1v11h-4z" fill="#24509d" stroke="#222"/>',
    folder: '<path d="M1 13V4h5l1 2h7v7z" fill="#f2d458" stroke="#a78523"/><path d="M1 13l3-5h11l-2 5z" fill="#fbe88a" stroke="#a78523"/>',
    resource: '<path d="M2 3h11v9H2z" fill="#c9252c" stroke="#8a1a1d"/><path d="M4 6h4v3H4" stroke="#fff"/><circle cx="11" cy="10" r="3" fill="#ddd" stroke="#555"/>',
    palette: '<path d="M2 2h5v5H2zM9 3h5M9 6h5M10 9h4" stroke="#555"/><path d="M2 11h7M6 8l4 3-4 4" fill="#2c55c0" stroke="#2c55c0"/>',
    sphere: '<circle cx="8" cy="8" r="6" fill="#3aa24b" stroke="none"/><path d="M8 8V2a6 6 0 0 1 6 6z" fill="#3c69cf" stroke="none"/><path d="M8 8V2a6 6 0 0 0-5 9z" fill="#d84136" stroke="none"/>',
    color: '<path d="M2 2h10v12H2z" fill="#3e6fc4" stroke="#333"/><path d="M4 5h6M4 8h6M4 11h6" stroke="#fff"/><path d="M7 10l6-7 2 2-6 7z" fill="#efbe2d" stroke="#7b5b15"/>',
    goldtag: '<path d="M2 10l7-7 5 3-7 8z" fill="#f1c62b" stroke="#96741a"/>',
    windows: '<path d="M2 4l5-1v5H2z" fill="#df4b31" stroke="none"/><path d="M8 3l6 1-1 4H8z" fill="#6fae3c" stroke="none"/><path d="M1 9h6v5l-6-1z" fill="#3b70c5" stroke="none"/><path d="M8 9h5l-1 5-4-1z" fill="#efc22f" stroke="none"/>',
    appA: '<path d="M1 1h14v14H1z" fill="#2b7bc9" stroke="#1f5f9e"/><path d="M3 13L8 3l5 10M6 10h5" stroke="#fff" stroke-width="2"/>',
    ie: '<circle cx="8" cy="8" r="5" stroke="#3192cf" stroke-width="3"/><path d="M4 8h8" stroke="#3192cf" stroke-width="2"/><path d="M1 13Q0 8 14 2" stroke="#e6b93d"/>',
    note: '<path d="M3 2h10v12H3z" fill="#a8c4e4" stroke="#587cac"/><path d="M5 5h6M5 8h6M5 11h6" stroke="#fff"/>',
    mail: '<rect x="2" y="2" width="12" height="12" rx="3" fill="#f7ebcb" stroke="#d79a3b"/><path d="M4 5l4 4 4-4M5 12q4-3 6 0" stroke="#d79a3b"/>',
    outlook: '<path d="M2 3h11v11H2z" fill="#d7e7f5" stroke="#316a9c"/><circle cx="8" cy="8" r="4" stroke="#2f80b8" stroke-width="2"/><path d="M6 8h5" stroke="#2f80b8"/>',
    fox: '<path d="M1 2h14v12H1z" fill="#b77722" stroke="#80531a"/><circle cx="8" cy="8" r="4" stroke="#5f3808"/><path d="M6 8h5v4" stroke="#5f3808"/>',
    bird: '<path d="M1 1h14v14H1z" fill="#163f94" stroke="none"/><path d="M9 2l-4 7h4l-1 5 5-7H9z" fill="#fff" stroke="none"/>',
    player: '<circle cx="8" cy="8" r="6" fill="#f2f4fa" stroke="#586782" stroke-width="2"/><path d="M6 5l5 3-5 3z" fill="#234999" stroke="none"/><path d="M11 13l3-3" stroke="#db7c2c" stroke-width="2"/>',
    globe: '<circle cx="8" cy="8" r="6" fill="#cfe9f5" stroke="none"/><path d="M3 6q3-4 6-2v3l4 3q-1 4-4 3M3 9l4 4" stroke="#3a9fcb" stroke-width="2"/>',
    rar: '<path d="M2 1h11v4H2z" fill="#9c3d7c" stroke="#333"/><path d="M2 6h11v4H2z" fill="#3e62a8" stroke="#333"/><path d="M2 11h11v4H2z" fill="#3c8a4d" stroke="#333"/><path d="M5 1v14" stroke="#d7b945"/>',
    helpbox: '<path d="M2 2h12v12H2z" fill="#fff"/><path d="M6 6q2-3 4 0L8 9v1M8 12v1" stroke-width="1.6"/>',
    shield: '<circle cx="6" cy="6" r="5" fill="#e4ba35" stroke="#8d701d"/><circle cx="11" cy="11" r="4" fill="#469c47" stroke="#2c642d"/>',
    screen: '<path d="M2 2h10v8H2z" fill="#3b92d4" stroke="#245d8e"/><path d="M5 8h10v6H5z" fill="#5bc19c" stroke="#245d8e"/>'
};

function svg(name) {
    return `<svg class="icon" viewBox="0 0 16 16" aria-hidden="true">${shapes[name]}</svg>`;
}

// "name:color*!" - * adds a drop-down arrow, ! marks the pressed button
document.querySelectorAll('[data-icons]').forEach(group => {
    group.innerHTML = group.dataset.icons.split(' ').map(item => {
        const [name, color = ''] = item.replace(/[*!]/g, '').split(':');
        const state = (item.includes('*') ? ' drop' : '') + (item.includes('!') ? ' active' : '');
        return `<button class="${color}${state}" aria-label="${name}">${svg(name)}</button>`;
    }).join('');
});

document.querySelectorAll('[data-icon]').forEach(span => {
    const [name, color] = span.dataset.icon.split(':');
    if (color) span.classList.add(color);
    span.innerHTML = svg(name);
});
```
